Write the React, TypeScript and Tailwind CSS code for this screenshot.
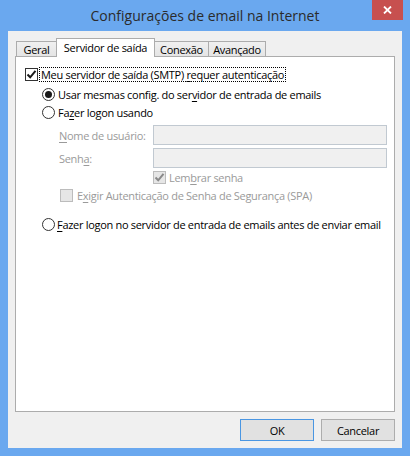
import React from "react";

const font = { fontFamily: '"Open Sans", "Noto Sans", sans-serif' };
const titleFont = { fontFamily: '"Open Sans", "Noto Sans", sans-serif' };

function Check({ color = "#1a1a1a" }: { color?: string }) {
  return (
    <svg width="11" height="11" viewBox="0 0 11 11" className="block">
      <path d="M1.5 5.5 L4.2 8.3 L9.5 1.8" fill="none" stroke={color} strokeWidth="2" />
    </svg>
  );
}

function Box({ checked, disabled }: { checked?: boolean; disabled?: boolean }) {
  return (
    <span
      className={
        "flex items-center justify-center w-[13px] h-[13px] shrink-0 border " +
        (disabled ? "border-[#bcbcbc] bg-[#e6e6e6]" : "border-[#333333] bg-white")
      }
    >
      {checked ? <Check color={disabled ? "#8a8a8a" : "#1a1a1a"} /> : null}
    </span>
  );
}

function Radio({ checked }: { checked?: boolean }) {
  return (
    <span className="flex items-center justify-center w-[13px] h-[13px] shrink-0 rounded-full border border-[#333333] bg-white">
      {checked ? <span className="block w-[7px] h-[7px] rounded-full bg-[#1a1a1a]" /> : null}
    </span>
  );
}

export default function App() {
  return (
    <div className="w-[410px] h-[456px] bg-[#6aa8ef] flex flex-col text-[11px] tracking-[-0.3px] leading-[15px] text-black whitespace-nowrap" style={font}>
      {/* title bar */}
      <div className="h-[31px] flex items-start shrink-0">
        <div className="w-[38px]" />
        <div className="flex-1 h-[30px] flex items-center justify-center text-[14px] tracking-normal text-[#2b2b2b]" style={titleFont}>
          Configurações de email na Internet
        </div>
        <div className="w-[31px] h-[20px] bg-[#c7504f] flex items-center justify-center">
          <svg width="9" height="8" viewBox="0 0 9 8">
            <path d="M1 0.5 L8 7.5 M8 0.5 L1 7.5" stroke="#ffffff" strokeWidth="1.8" />
          </svg>
        </div>
        <div className="w-[7px]" />
      </div>

      {/* client */}
      <div className="flex-1 mx-[8px] mb-[8px] bg-[#f0f0f0] flex flex-col p-[7px]">
        {/* tabs */}
        <div className="h-[18px] flex items-end pl-[1px] shrink-0">
          <div className="w-[40px] h-[15px] border-l border-t border-[#acacac] bg-gradient-to-b from-[#f0f0f0] to-[#e5e5e5] flex items-center justify-center">
            Geral
          </div>
          <div className="relative z-10 w-[99px] h-[19px] -mb-px border border-b-0 border-[#acacac] bg-white flex items-center justify-center pb-[1px]">
            Servidor de saída
          </div>
          <div className="w-[54px] h-[15px] border-t border-r border-[#acacac] bg-gradient-to-b from-[#f0f0f0] to-[#e5e5e5] flex items-center justify-center">
            Conexão
          </div>
          <div className="w-[57px] h-[15px] border-t border-r border-[#acacac] bg-gradient-to-b from-[#f0f0f0] to-[#e5e5e5] flex items-center justify-center">
            Avançado
          </div>
        </div>

        {/* panel */}
        <div className="flex-1 border border-[#acacac] bg-white flex flex-col pt-[10px] pl-[9px] pr-[7px]">
          <div className="h-[15px] flex items-center">
            <Box checked />
            <span className="ml-[1px] px-[1px] border border-dotted border-black leading-[13px]">
              Meu servidor de saída (SMTP) <span className="underline underline-offset-2">r</span>equer autenticação
            </span>
          </div>

          <div className="h-[15px] mt-[5px] ml-[17px] flex items-center gap-[3px]">
            <Radio checked />
            <span>
              Usar mesmas config. do ser<span className="underline underline-offset-2">v</span>idor de entrada de emails
            </span>
          </div>

          <div className="h-[15px] mt-[3px] ml-[17px] flex items-center gap-[3px]">
            <Radio />
            <span>
              Fa<span className="underline underline-offset-2">z</span>er logon usando
            </span>
          </div>

          <div className="h-[20px] mt-[5px] ml-[34px] flex items-center">
            <span className="w-[94px] shrink-0 text-[#9a9a9a]">
              <span className="underline underline-offset-2">N</span>ome de usuário:
            </span>
            <div className="flex-1 h-[20px] border border-[#c1c9d1] bg-[#f0f0f0]" />
          </div>

          <div className="h-[20px] mt-[3px] ml-[34px] flex items-center">
            <span className="w-[94px] shrink-0 text-[#9a9a9a]">
              Senh<span className="underline underline-offset-2">a</span>:
            </span>
            <div className="flex-1 h-[20px] border border-[#c1c9d1] bg-[#f0f0f0]" />
          </div>

          <div className="h-[15px] mt-[2px] ml-[128px] flex items-center gap-[3px] text-[#9a9a9a]">
            <Box checked disabled />
            <span>
              Lem<span className="underline underline-offset-2">b</span>rar senha
            </span>
          </div>

          <div className="h-[15px] mt-[3px] ml-[35px] flex items-center gap-[4px] text-[#9a9a9a]">
            <Box disabled />
            <span>
              E<span className="underline underline-offset-2">x</span>igir Autenticação de Senha de Segurança (SPA)
            </span>
          </div>

          <div className="h-[15px] mt-[14px] ml-[17px] flex items-center gap-[2px]">
            <Radio />
            <span>
              <span className="underline underline-offset-2">F</span>azer logon no servidor de entrada de emails antes de enviar email
            </span>
          </div>
        </div>

        {/* buttons */}
        <div className="h-[22px] mt-[7px] flex justify-end gap-[7px] shrink-0">
          <div className="w-[74px] h-[22px] border border-[#4a96e2] bg-[#e1e1e1] flex items-center justify-center">OK</div>
          <div className="w-[74px] h-[22px] border border-[#adadad] bg-[#e1e1e1] flex items-center justify-center">Cancelar</div>
        </div>
      </div>
    </div>
  );
}
